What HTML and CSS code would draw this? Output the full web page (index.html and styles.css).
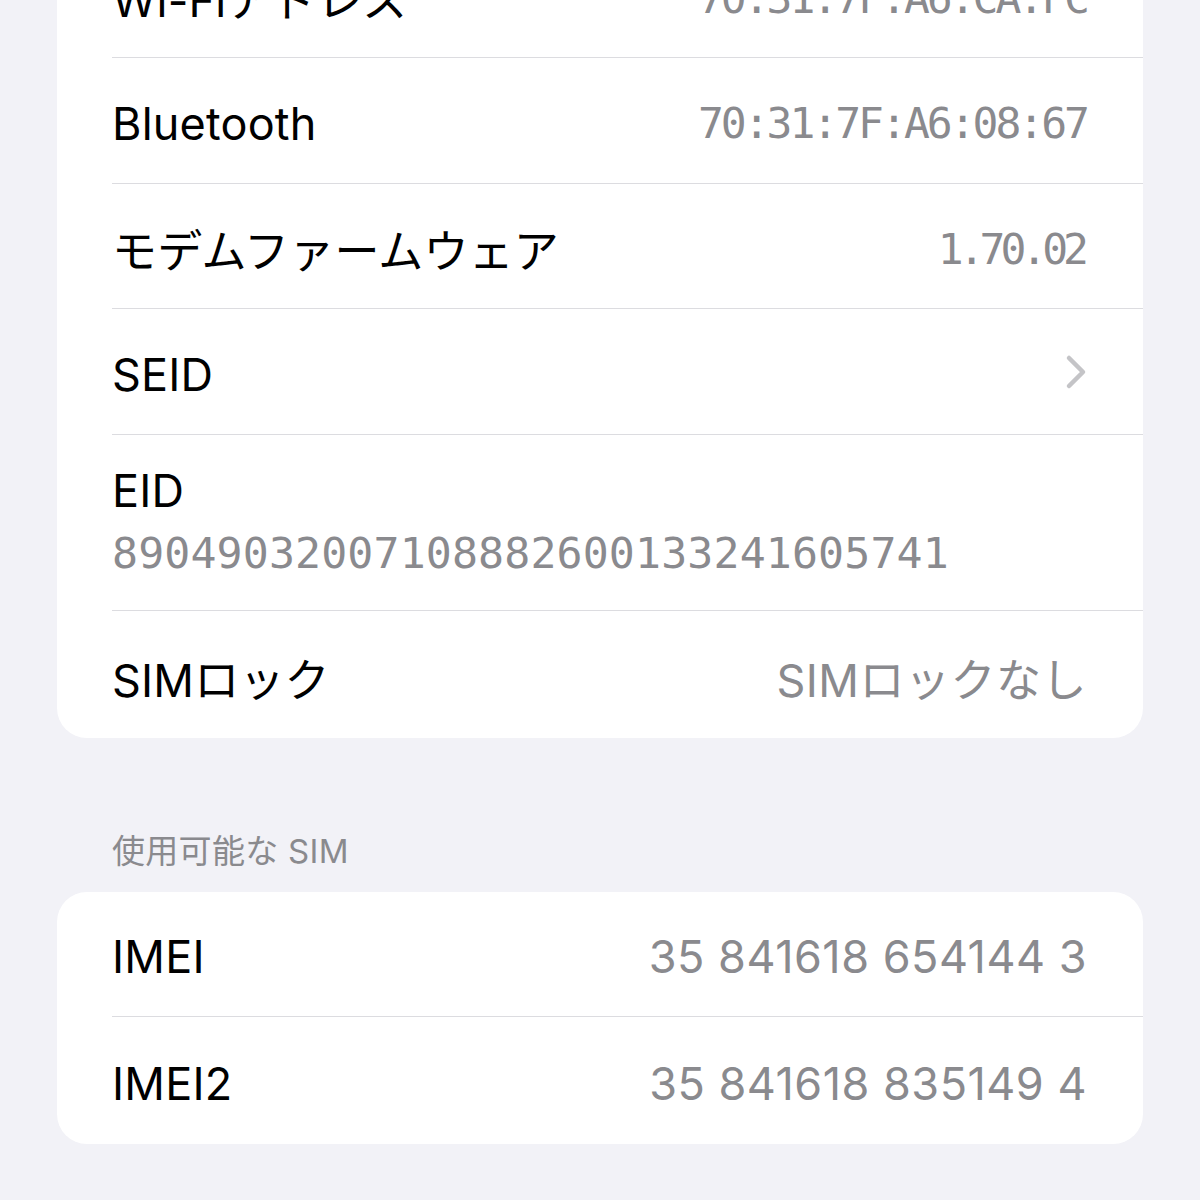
FILE: index.html
```html
<!DOCTYPE html>
<html lang="ja">
<head>
    <meta charset="UTF-8">
    <meta name="viewport" content="width=device-width, initial-scale=1.0">
    <title>情報</title>
    <link rel="stylesheet" href="styles.css">
</head>
<body>
    <!-- Card: device info -->
    <div class="card card-top">
        <div class="row">
            <div class="row-inner">
                <span class="label">Wi-Fiアドレス</span>
                <span class="value mono mac">70:31:7F:A6:CA:FC</span>
            </div>
        </div>
        <div class="row">
            <div class="row-inner">
                <span class="label">Bluetooth</span>
                <span class="value mono mac">70:31:7F:A6:08:67</span>
            </div>
        </div>
        <div class="row">
            <div class="row-inner">
                <span class="label">モデムファームウェア</span>
                <span class="value mono fw">1.70.02</span>
            </div>
        </div>
        <div class="row">
            <div class="row-inner">
                <span class="label">SEID</span>
                <svg class="chevron" width="22" height="36" viewBox="0 0 22 36">
                    <polyline points="4,4 18,18 4,32" fill="none" stroke="#c4c4c7" stroke-width="4.5" stroke-linecap="round" stroke-linejoin="round"/>
                </svg>
            </div>
        </div>
        <div class="row row-tall">
            <div class="row-inner stack">
                <span class="label">EID</span>
                <span class="value mono eid">89049032007108882600133241605741</span>
            </div>
        </div>
        <div class="row row-last">
            <div class="row-inner">
                <span class="label">SIMロック</span>
                <span class="value">SIMロックなし</span>
            </div>
        </div>
    </div>

    <!-- Section: SIM -->
    <div class="section-title">使用可能な SIM</div>
    <div class="card">
        <div class="row">
            <div class="row-inner">
                <span class="label">IMEI</span>
                <span class="value">35 841618 654144 3</span>
            </div>
        </div>
        <div class="row row-last">
            <div class="row-inner">
                <span class="label">IMEI2</span>
                <span class="value">35 841618 835149 4</span>
            </div>
        </div>
    </div>
</body>
</html>
```

FILE: styles.css
```css
body {
    margin: 0;
    padding: 0 57px;
    background-color: #f2f2f7;
    font-family: Inter, "Noto Sans CJK JP", sans-serif;
    color: #000;
    overflow: hidden;
}

/* Cards */
.card {
    background: #fff;
    border-radius: 30px;
    overflow: hidden;
}

.card-top {
    margin-top: -67.5px;
    border-top-left-radius: 0;
    border-top-right-radius: 0;
}

.row {
    padding-left: 55px;
}

.row-inner {
    height: 124.5px;
    padding-right: 56px;
    border-bottom: 1px solid #dcdce0;
    display: flex;
    align-items: center;
    justify-content: space-between;
}

.row-tall .row-inner {
    height: 165px;
    padding-bottom: 10px;
}

.row-last .row-inner {
    border-bottom: none;
    height: 127px;
}

.stack {
    flex-direction: column;
    align-items: flex-start;
    justify-content: center;
    gap: 10px;
}

.label {
    font-size: 45px;
    padding-top: 6px;
    letter-spacing: 0.2px;
}

.value {
    font-size: 45px;
    color: #8a8a8e;
    padding-top: 6px;
    letter-spacing: 0.5px;
}

.mono {
    font-family: "DejaVu Sans Mono", "Liberation Mono", monospace;
    font-size: 43px;
    letter-spacing: 0;
}

.mac {
    letter-spacing: -3px;
}

.fw {
    letter-spacing: -5px;
    padding-right: 3px;
}

.eid {
    padding-top: 0;
    font-size: 43.2px;
    letter-spacing: 0.15px;
}

.chevron {
    margin-top: 2px;
}

/* Section header */
.section-title {
    font-size: 33px;
    color: #8a8a8e;
    padding: 87px 0 19px 55px;
    letter-spacing: 0.3px;
}
```
